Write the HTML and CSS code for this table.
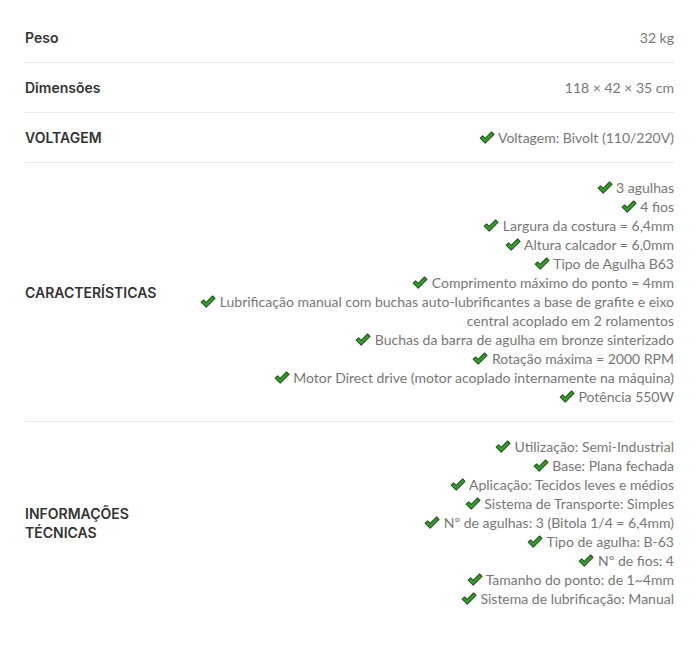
FILE: index.html
```html
<!DOCTYPE html>
<html lang="pt-BR">
<head>
<meta charset="utf-8">
<link rel="stylesheet" href="styles.css">
</head>
<body>
<svg width="0" height="0" class="defs">
  <defs>
    <symbol id="chk" viewBox="0 0 16 13">
      <path d="M1.2 7.2 L3.6 4.9 L6.2 7.4 L12.6 1 L15 3.4 L6.2 12.1 Z" fill="#3c9a34" stroke="#1d5a18" stroke-width="1.1" stroke-linejoin="round"/>
    </symbol>
  </defs>
</svg>
<table class="attrs">
  <tr class="row">
    <th class="label">Peso</th>
    <td class="value">32 kg</td>
  </tr>
  <tr class="row">
    <th class="label">Dimensões</th>
    <td class="value">118 × 42 × 35 cm</td>
  </tr>
  <tr class="row">
    <th class="label">VOLTAGEM</th>
    <td class="value"><p><svg class="ic"><use href="#chk"/></svg> Voltagem: Bivolt (110/220V)</p></td>
  </tr>
  <tr class="row">
    <th class="label">CARACTERÍSTICAS</th>
    <td class="value">
      <p><svg class="ic"><use href="#chk"/></svg> 3 agulhas</p>
      <p><svg class="ic"><use href="#chk"/></svg> 4 fios</p>
      <p><svg class="ic"><use href="#chk"/></svg> Largura da costura = 6,4mm</p>
      <p><svg class="ic"><use href="#chk"/></svg> Altura calcador = 6,0mm</p>
      <p><svg class="ic"><use href="#chk"/></svg> Tipo de Agulha B63</p>
      <p><svg class="ic"><use href="#chk"/></svg> Comprimento máximo do ponto = 4mm</p>
      <p><svg class="ic"><use href="#chk"/></svg> Lubrificação manual com buchas auto-lubrificantes a base de grafite e eixo central acoplado em 2 rolamentos</p>
      <p><svg class="ic"><use href="#chk"/></svg> Buchas da barra de agulha em bronze sinterizado</p>
      <p><svg class="ic"><use href="#chk"/></svg> Rotação máxima = 2000 RPM</p>
      <p><svg class="ic"><use href="#chk"/></svg> Motor Direct drive (motor acoplado internamente na máquina)</p>
      <p><svg class="ic"><use href="#chk"/></svg> Potência 550W</p>
    </td>
  </tr>
  <tr class="row">
    <th class="label">INFORMAÇÕES TÉCNICAS</th>
    <td class="value">
      <p><svg class="ic"><use href="#chk"/></svg> Utilização: Semi-Industrial</p>
      <p><svg class="ic"><use href="#chk"/></svg> Base: Plana fechada</p>
      <p><svg class="ic"><use href="#chk"/></svg> Aplicação: Tecidos leves e médios</p>
      <p><svg class="ic"><use href="#chk"/></svg> Sistema de Transporte: Simples</p>
      <p><svg class="ic"><use href="#chk"/></svg> Nº de agulhas: 3 (Bitola 1/4 = 6,4mm)</p>
      <p><svg class="ic"><use href="#chk"/></svg> Tipo de agulha: B-63</p>
      <p><svg class="ic"><use href="#chk"/></svg> Nº de fios: 4</p>
      <p><svg class="ic"><use href="#chk"/></svg> Tamanho do ponto: de 1~4mm</p>
      <p><svg class="ic"><use href="#chk"/></svg> Sistema de lubrificação: Manual</p>
    </td>
  </tr>
</table>
</body>
</html>
```
FILE: styles.css
```css
html, body {
  margin: 0;
  padding: 0;
  background: #fff;
}
body {
  padding: 13px 24px 0 25px;
}
.defs {
  position: absolute;
  width: 0;
  height: 0;
}
.attrs {
  width: 649px;
  border-collapse: collapse;
  table-layout: fixed;
}
.row + .row th,
.row + .row td {
  border-top: 1px solid #e8e8e8;
}
.label {
  width: 160px;
  padding: 15px 0;
  text-align: left;
  vertical-align: middle;
  font-family: "Inter", "Open Sans", sans-serif;
  font-weight: 600;
  font-size: 14px;
  line-height: 19px;
  color: #333;
}
.value {
  padding: 15px 0;
  text-align: right;
  vertical-align: middle;
  font-family: "Lato", "Liberation Sans", sans-serif;
  font-size: 14px;
  line-height: 19px;
  color: #777;
}
.value p {
  margin: 0;
}
.ic {
  width: 16px;
  height: 13px;
  vertical-align: -1px;
}
```
